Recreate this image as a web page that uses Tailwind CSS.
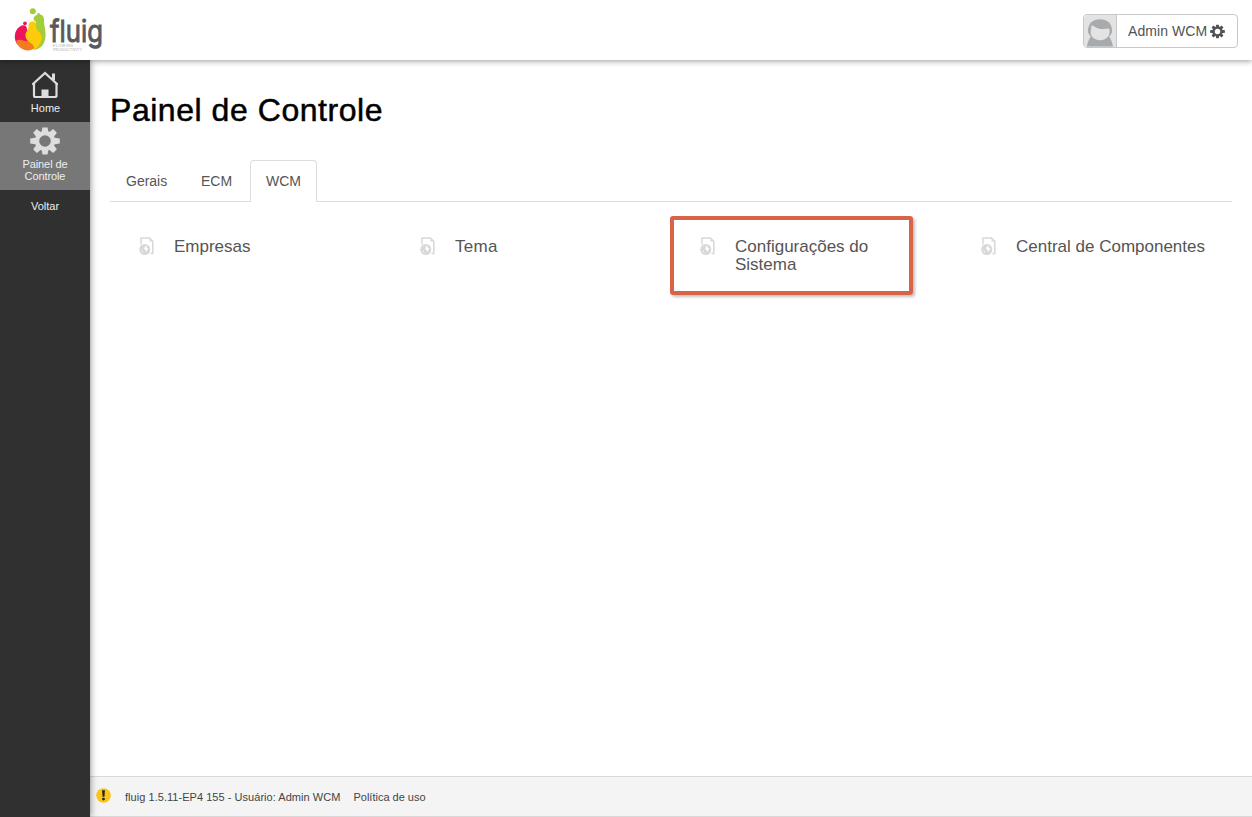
<!DOCTYPE html>
<html lang="pt-BR">
<head>
  <meta charset="UTF-8">
  <title>fluig - Painel de Controle</title>
  <meta name="viewport" content="width=device-width, initial-scale=1.0">
  <script src="https://cdn.jsdelivr.net/npm/@tailwindcss/browser@4"></script>
</head>
<body class="h-screen overflow-hidden flex flex-col bg-white text-[#555] font-['Liberation_Sans',Arial,sans-serif]">
  <!-- shared icons -->
  <svg class="hidden">
    <symbol id="gear" viewBox="-15 -15 30 30">
      <g fill="currentColor">
        <path d="M-3.400-8 -2.600-13.500H2.600L3.400-8V8L2.600 13.500H-2.600L-3.400 8Z"/>
        <path d="M-3.400-8 -2.600-14.800H2.600L3.400-8V8L2.600 14.800H-2.600L-3.400 8Z" transform="rotate(90)"/>
        <path d="M-3.400-8 -2.600-14.200H2.600L3.400-8V8L2.600 14.200H-2.600L-3.400 8Z" transform="rotate(45)"/>
        <path d="M-3.400-8 -2.600-14.200H2.600L3.400-8V8L2.600 14.200H-2.600L-3.400 8Z" transform="rotate(-45)"/>
        <circle r="10.200"/>
      </g>
    </symbol>
    <symbol id="page" viewBox="0 0 15 18">
      <path d="M2 7.500V1H10.500L13.800 4.300V16.500H11.500" fill="none" stroke="#d8d8d8" stroke-width="1.500"/>
      <path d="M10.500 1V4.500H14Z" fill="#d8d8d8"/>
      <circle cx="5.800" cy="12.500" r="5.500" fill="#d8d8d8"/>
      <path d="M6.500 9 8 9.500 7.500 11 9.500 11.500 8 13.500 7 15 6.500 13 5 11.500Z" fill="#fff"/>
      <path d="M2 13 4 14.500 3.500 15.500Z" fill="#fff"/>
    </symbol>
  </svg>

  <header class="relative z-20 h-[60px] shrink-0 flex items-center justify-between pl-3 pr-[14px] bg-white shadow-[0_1px_6px_rgba(0,0,0,0.4)]">
    <svg width="98" height="56" viewBox="12 2 98 56">
      <!-- drop -->
      <path d="M35 16C40 13 44 15 44 19C43.500 24 46 30 45.600 36C45 44 41 49 34 50L30 35 36 22C33 20 33 18 35 16Z" fill="#a5cd39"/>
      <circle cx="32.800" cy="11.300" r="3" fill="#a5cd39"/>
      <circle cx="38.600" cy="14.200" r="1.300" fill="#a5cd39"/>
      <path d="M20 26.500C23 24 27 25 27 29L29 41 18 45C13 40 14 30 20 26.500Z" fill="#ec145b"/>
      <circle cx="25" cy="23.300" r="1.900" fill="#ec145b"/>
      <path d="M16 41C19 38 23 41 27 41C32 41 34 38 38 38L36 47C30 53 19 51 16 41Z" fill="#f47a20"/>
      <path d="M30.500 22C34 20 36.500 23 36 27C37 33 44 33 41 41C39 46 37 48 34 50C36 43 26 43 25.500 36C25 31 29.500 30 28.500 25C28.500 23.500 29 22.500 30.500 22Z" fill="#fdcb0a"/>
      <text x="50" y="41.500" font-family="Inter, sans-serif" font-size="30" textLength="53" lengthAdjust="spacingAndGlyphs" fill="#58595b" stroke="#58595b" stroke-width="0.900">fluig</text>
      <g font-family="Liberation Sans, sans-serif" font-size="3.800" fill="#aaa">
        <text x="53" y="46.500" textLength="20">FLOWING</text>
        <text x="53" y="51" textLength="29">PRODUCTIVITY</text>
      </g>
    </svg>
    <button class="flex items-center w-[155px] h-[34px] mt-[2px] rounded-[4px] border border-[#c8c8c8] overflow-hidden text-sm text-[#505356]">
      <svg width="33" height="32" viewBox="0 0 33 32" class="shrink-0 border-r border-[#c8c8c8] bg-[#e3e3e3]">
        <path d="M3 32C4 26 6 23 8 20H25C28 24 29 28 30 32Z" fill="#a8abae"/>
        <path d="M4 17C4 8 9 4 16.500 4S29 8 29 17L27 21H6Z" fill="#a8abae"/>
        <path d="M7.500 14.500C7 11 8 10 9.500 10.500C15 15 21 14 26 13.500C28 21 23 25.500 17 25.500C11 25.500 6 22 7 15Z" fill="#e3e3e3"/>
      </svg>
      <span class="ml-[11px] tracking-[0.080px]">Admin WCM</span>
      <svg width="15" height="15" viewBox="-15 -15 30 30" class="ml-[3px] shrink-0">
        <use href="#gear" x="-15" y="-15" width="30" height="30"/>
        <circle r="5.500" fill="#fff"/>
      </svg>
    </button>
  </header>

  <div class="flex flex-1 min-h-0">
    <nav class="relative z-10 w-[90px] shrink-0 bg-[#303030] shadow-[0_0_7px_rgba(0,0,0,0.500)] text-[11px] leading-3 text-[#eee] text-center">
      <a class="flex flex-col items-center h-[62px] pt-[11px]">
        <svg width="28" height="28" viewBox="0 0 28 28" fill="none" stroke="#ddd">
          <path d="M3 12V24.500Q3 26 4.500 26H24Q25.500 26 25.500 24.500V12" stroke-width="2.200"/>
          <path d="M2 13 14 2 26 13" stroke-width="2.300" stroke-linecap="round"/>
          <path d="M22.500 9V2.500" stroke-width="3"/>
          <path d="M10.500 18.500H17.500V26H10.500Z" fill="#ddd" stroke="none"/>
        </svg>
        <span class="mt-[3px] pl-px">Home</span>
      </a>
      <a class="flex flex-col items-center h-[68px] pt-1 bg-[#777]">
        <svg width="32" height="30" viewBox="-15 -15 30 30" class="text-[#ddd]">
          <use href="#gear" x="-15" y="-15" width="30" height="30"/>
          <circle r="5.800" fill="#777"/>
        </svg>
        <span class="mt-[2px] w-[60px] tracking-[-0.100px]">Painel de Controle</span>
      </a>
      <a class="block pt-[10px]">Voltar</a>
    </nav>

    <div class="flex flex-col flex-1 min-w-0">
      <main class="flex-1 px-5 pt-[30px]">
        <h1 class="text-[32px] leading-10 tracking-[0.540px] text-black [-webkit-text-stroke:0.500px_black]">Painel de Controle</h1>
        <div class="flex h-[42px] mt-[30px] border-b border-[#ddd] text-sm leading-[42px]">
          <a class="w-[75px] pl-4">Gerais</a>
          <a class="w-[65px] pl-4">ECM</a>
          <a class="w-[67px] h-[42px] pl-[15px] rounded-t-[4px] border border-b-0 border-[#ddd] bg-white leading-10">WCM</a>
        </div>
        <div class="flex pt-[14px] text-[17px] leading-[18px]">
          <a class="flex w-[281px] pl-[29px] pt-[21px]">
            <svg width="15" height="18" class="shrink-0"><use href="#page"/></svg>
            <span class="ml-5 mt-px">Empresas</span>
          </a>
          <a class="flex w-[279px] pl-[29px] pt-[21px]">
            <svg width="15" height="18" class="shrink-0"><use href="#page"/></svg>
            <span class="ml-5 mt-px tracking-[0.300px]">Tema</span>
          </a>
          <a class="flex w-[243px] h-[79px] pl-[26px] pt-[17px] border-4 border-[#d96346] rounded-[3px] shadow-[2px_2px_3px_rgba(0,0,0,0.250)]">
            <svg width="15" height="18" class="shrink-0"><use href="#page"/></svg>
            <span class="ml-5 mt-px w-[150px]">Configurações do Sistema</span>
          </a>
          <a class="flex flex-1 pl-[68px] pt-[21px] whitespace-nowrap">
            <svg width="15" height="18" class="shrink-0"><use href="#page"/></svg>
            <span class="ml-5 mt-px">Central de Componentes</span>
          </a>
        </div>
      </main>
      <footer class="flex items-center h-[41px] pl-[6px] border-y border-[#d8d8d8] bg-[#f4f4f4] text-[11px] text-[#444]">
        <svg width="15" height="15" viewBox="0 0 16 16" class="relative z-20 -mt-[3px]">
          <circle cx="8" cy="8" r="7.800" fill="#fcc419"/>
          <path d="M6.500 2.500H9.500L9 9.300H7Z" fill="#222"/>
          <circle cx="8" cy="11.800" r="1.500" fill="#222"/>
        </svg>
        <span class="ml-[14px] pt-[2px] tracking-[0.040px]">fluig 1.5.11-EP4 155 - Usuário: Admin WCM</span>
        <a class="ml-[13px] pt-[2px]">Política de uso</a>
      </footer>
    </div>
  </div>
</body>
</html>
